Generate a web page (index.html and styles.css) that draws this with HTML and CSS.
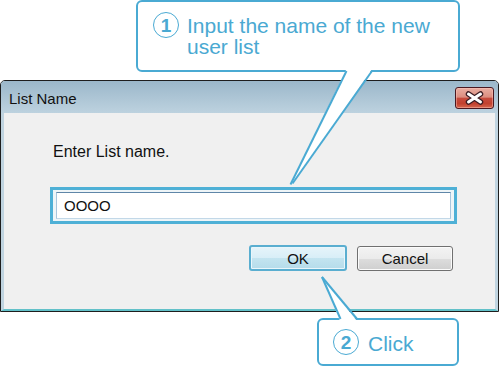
FILE: index.html
```html
<!DOCTYPE html>
<html>
<head>
<meta charset="utf-8">
<link rel="stylesheet" href="styles.css">
</head>
<body>
<div class="stage">
  <div class="window">
    <div class="titlebar">
      <span class="title">List Name</span>
      <div class="close">
        <svg width="37" height="20" viewBox="0 0 37 20">
          <path d="M12.5 6 L24.5 14 M24.5 6 L12.5 14" stroke="#3b1d24" stroke-width="5.5" stroke-linecap="round" fill="none"/>
          <path d="M12.5 6 L24.5 14 M24.5 6 L12.5 14" stroke="#ffffff" stroke-width="3" stroke-linecap="round" fill="none"/>
        </svg>
      </div>
    </div>
    <div class="content">
      <p class="prompt">Enter List name.</p>
      <div class="field-hl"><div class="field">OOOO</div></div>
      <div class="buttons">
        <div class="btn btn-ok">OK</div>
        <div class="btn">Cancel</div>
      </div>
    </div>
  </div>
  <div class="callout callout-1">
    <span class="num">1</span>
    <span class="ctext">Input the name of the new<br>user list</span>
  </div>
  <div class="callout callout-2">
    <span class="num">2</span>
    <span class="ctext ctext-2">Click</span>
  </div>
  <svg class="tails" width="500" height="368" viewBox="0 0 500 368">
    <polygon points="346.5,69 372,69 293.5,183 290.5,184.5" fill="#ffffff"/>
    <line x1="346.5" y1="71" x2="290.5" y2="184.5" stroke="#4aaad3" stroke-width="2"/>
    <line x1="372" y1="71" x2="292.5" y2="183.5" stroke="#4aaad3" stroke-width="2"/>
    <polygon points="322,277 340,321 357,321" fill="#ffffff"/>
    <line x1="322" y1="277" x2="340.5" y2="319" stroke="#4aaad3" stroke-width="2"/>
    <line x1="322" y1="277" x2="357" y2="319" stroke="#4aaad3" stroke-width="2"/>
  </svg>
</div>
</body>
</html>
```
FILE: styles.css
```css
* { box-sizing: border-box; }
body {
  margin: 0;
  background: #ffffff;
  font-family: "Liberation Sans", Arial, sans-serif;
}
.stage {
  position: relative;
  width: 500px;
  height: 368px;
  overflow: hidden;
}
.window {
  margin-top: 80px;
  width: 499px;
  border: 1px solid #1e1e1e;
  border-radius: 5px 5px 0 0;
  background: #f0f0f0;
}
.titlebar {
  height: 32px;
  display: flex;
  justify-content: space-between;
  align-items: flex-start;
  padding: 6px 4px 0 8px;
  background: linear-gradient(#9bb7ca, #bdd2df);
  border-radius: 4px 4px 0 0;
}
.title {
  font-size: 15px;
  line-height: 18px;
  margin-top: 3px;
  color: #111111;
}
.close {
  width: 39px;
  height: 22px;
  border: 1px solid #4a1820;
  border-radius: 3px;
  background: linear-gradient(#e9aea2 0%, #dc8e80 45%, #c64b3d 52%, #c2412f 78%, #d5684f 100%);
  box-shadow: inset 0 0 0 1px rgba(255, 200, 190, 0.45);
}
.close svg { display: block; }
.content {
  height: 198px;
  border-left: 3px solid #c0d4e0;
  border-right: 3px solid #c0d4e0;
  border-bottom: 2px solid #62c1c9;
  padding: 30px 0 0 49px;
  display: flex;
  flex-direction: column;
}
.prompt {
  margin: 0;
  font-size: 16px;
  line-height: 18px;
  color: #111111;
}
.field-hl {
  margin-top: 26px;
  margin-left: -3px;
  width: 407px;
  height: 37px;
  border: 3px solid #4eb0d6;
  padding: 2px 3px;
  background: #eef5f8;
}
.field {
  height: 27px;
  border: 1px solid;
  border-color: #5f86a8 #a9c6dd #c2d8e8 #a9c6dd;
  background: #ffffff;
  font-size: 15px;
  line-height: 25px;
  padding-left: 7px;
  color: #111111;
}
.buttons {
  margin-top: 21px;
  margin-left: 196px;
  display: flex;
  align-items: flex-start;
  gap: 10px;
}
.btn {
  width: 96px;
  height: 25px;
  margin-top: 1px;
  border: 1px solid #707070;
  border-radius: 3px;
  background: linear-gradient(#f3f3f3 0%, #ebebeb 50%, #dddddd 51%, #cfcfcf 100%);
  box-shadow: inset 0 0 0 1px #fbfbfb;
  font-size: 15px;
  color: #111111;
  display: flex;
  align-items: center;
  justify-content: center;
}
.btn-ok {
  width: 98px;
  height: 26px;
  margin-top: 0;
  border: 2px solid #5aaed0;
  background: linear-gradient(#e6f4fa 0%, #d8eef7 50%, #c3e4f0 51%, #b5dcea 100%);
  box-shadow: inset 0 0 0 1px #e9f6fb;
}
.callout {
  position: absolute;
  border: 2px solid #4aaad3;
  border-radius: 6px;
  background: #ffffff;
  display: flex;
  color: #4aa9d2;
}
.callout-1 {
  left: 136px;
  top: 0;
  width: 324px;
  height: 72px;
  padding: 10px 0 0 15px;
  align-items: flex-start;
  gap: 8px;
}
.callout-2 {
  left: 317px;
  top: 318px;
  width: 142px;
  height: 48px;
  padding-left: 14px;
  align-items: center;
  gap: 9px;
}
.num {
  flex: none;
  width: 26px;
  height: 26px;
  border: 1.5px solid #4aaad3;
  border-radius: 50%;
  display: flex;
  align-items: center;
  justify-content: center;
  font-size: 19px;
  font-weight: bold;
  line-height: 1;
}
.ctext {
  font-size: 21px;
  line-height: 21px;
  margin-top: 3px;
}
.tails {
  position: absolute;
  left: 0;
  top: 0;
}
```
